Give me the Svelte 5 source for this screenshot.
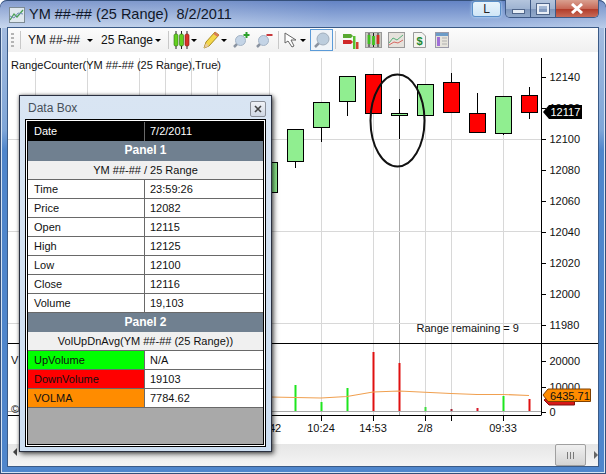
<script lang="ts">
	const prices = [12140, 12120, 12100, 12080, 12060, 12040, 12020, 12000, 11980];
	const priceY = (i: number) => 76.7 + i * 31;
	const gridX = [35, 87, 139, 165, 191, 217, 269, 321, 373, 425, 451, 503];
	const gridY = [139, 231, 323];

	// x, body top, body bottom, wick top, wick bottom, up
	const candles = [
		[269, 162, 192, 162, 192, true],
		[295, 129, 161, 129, 168, true],
		[321, 102, 127, 102, 142, true],
		[347, 76, 101, 76, 116, true],
		[373, 74, 113, 74, 113, false],
		[399, 113, 115, 99, 139, true],
		[425, 84, 115, 84, 115, true],
		[451, 82, 112, 73, 112, false],
		[477, 113, 132, 93, 132, false],
		[503, 96, 133, 96, 135, true],
		[529, 95, 112, 87, 119, false]
	] as const;

	const volumes = [
		[295, 385, '#1ee61e'],
		[321, 402, '#1ee61e'],
		[347, 388, '#1ee61e'],
		[373, 352, '#e01010'],
		[399, 363, '#e01010'],
		[425, 407, '#3fdc3f'],
		[451, 409, '#a02030'],
		[477, 408, '#d81828'],
		[503, 396, '#1ee61e'],
		[529, 399, '#e01010']
	] as const;

	const times = [
		[275, '42'],
		[321, '10:24'],
		[373, '14:53'],
		[425, '2/8'],
		[503, '09:33']
	] as const;

	const rows1 = [
		['Time', '23:59:26'],
		['Price', '12082'],
		['Open', '12115'],
		['High', '12125'],
		['Low', '12100'],
		['Close', '12116'],
		['Volume', '19,103']
	];
	const rows2 = [
		['UpVolume', 'N/A', 'up'],
		['DownVolume', '19103', 'down'],
		['VOLMA', '7784.62', 'ma']
	];
</script>

<div class="window">
	<header class="titlebar">
		<svg class="appicon" width="16" height="16" viewBox="0 0 16 16">
			<rect x="0.5" y="0.5" width="15" height="15" fill="#dfe8ee" stroke="#7d8b94" />
			<path d="M1 13 L5 7 L8 10 L14 3" fill="none" stroke="#4aa056" stroke-width="1.3" />
			<path d="M1 9 L5 11 L9 6 L14 7" fill="none" stroke="#6f8fb4" />
		</svg>
		<span class="title">YM ##-## (25 Range)  8/2/2011</span>
		<button class="lbtn">L</button>
		<div class="caption">
			<span class="cap min"><i></i></span>
			<span class="cap max"><i></i></span>
			<span class="cap close">
				<svg width="14" height="11" viewBox="0 0 14 11"><path d="M2 1 L12 10 M12 1 L2 10" stroke="#fff" stroke-width="3" /></svg>
			</span>
		</div>
	</header>

	<div class="content">
		<nav class="toolbar">
			<span class="grip"></span>
			<span class="sep first"></span>
			<span class="tb-text ym">YM ##-##</span>
			<span class="arrow a1"></span>
			<span class="tb-text range">25 Range</span>
			<span class="arrow a2"></span>
			<span class="sep s2"></span>
			<svg class="ic candles" width="17" height="18" viewBox="0 0 17 18">
				<path d="M3 0V18M8.5 0V18M14 0V18" stroke="#222" />
				<rect x="1" y="3" width="4" height="12" rx="1.5" fill="#63d020" stroke="#2d6a10" stroke-width=".6" />
				<rect x="6.5" y="3" width="4" height="12" rx="1.5" fill="#63d020" stroke="#2d6a10" stroke-width=".6" />
				<rect x="12" y="3" width="4" height="12" rx="1.5" fill="#d8352a" stroke="#7a1a10" stroke-width=".6" />
			</svg>
			<span class="arrow a3"></span>
			<svg class="ic pencil" width="17" height="18" viewBox="0 0 17 18">
				<path d="M1 17 L3 11 L12 1 L16 4 L6 15 Z" fill="#f4d84a" stroke="#a88a20" />
				<path d="M1 17 L3 12 L6 15 Z" fill="#e8c9a0" />
				<path d="M12 1 L16 4 L14.5 6 L10.5 3 Z" fill="#d87a5a" />
			</svg>
			<span class="arrow a4"></span>
			<svg class="ic zoomin" width="18" height="18" viewBox="0 0 18 18">
				<path d="M2 16 L7 11" stroke="#8a93a0" stroke-width="2.5" />
				<circle cx="8.5" cy="9.5" r="5" fill="#c4d4e6" stroke="#a4b4c6" />
				<path d="M14.5 1V7M11.5 4H17.5" stroke="#2ca02c" stroke-width="2" />
			</svg>
			<svg class="ic zoomout" width="18" height="18" viewBox="0 0 18 18">
				<path d="M2 16 L7 11" stroke="#8a93a0" stroke-width="2.5" />
				<circle cx="8.5" cy="9.5" r="5" fill="#c4d4e6" stroke="#a4b4c6" />
				<path d="M11.5 4H17.5" stroke="#c8383c" stroke-width="2" />
			</svg>
			<span class="sep s3"></span>
			<svg class="ic cursor" width="14" height="16" viewBox="0 0 14 16">
				<path d="M1 1 L1 11 L4 9 L8 15 L10 14 L7 8 L12 8 Z" fill="#fff" stroke="#666" />
			</svg>
			<span class="arrow a5"></span>
			<span class="selected">
				<svg width="18" height="18" viewBox="0 0 18 18">
					<path d="M2 16 L7 11" stroke="#8a93a0" stroke-width="2.5" />
					<circle cx="10" cy="8" r="6" fill="#bccddd" stroke="#a0aebc" />
				</svg>
			</span>
			<span class="sep s4"></span>
			<svg class="ic strat" width="17" height="17" viewBox="0 0 17 17">
				<path d="M1 2 H9 L11 4 L9 6 H1 Z" fill="#58a830" />
				<path d="M1 8 H9 L11 10 L9 12 H1 Z" fill="#d02828" />
				<rect x="11" y="4" width="2.5" height="13" fill="#58c030" />
				<rect x="14" y="10" width="2.5" height="7" fill="#d04030" />
			</svg>
			<svg class="ic tile" width="17" height="16" viewBox="0 0 17 16">
				<rect x="0.5" y="0.5" width="16" height="15" fill="#c8c8c0" stroke="#999" />
				<path d="M4 1V15M8.5 1V15M13 1V15" stroke="#222" />
				<rect x="2.6" y="3" width="2.8" height="9" fill="#40c020" />
				<rect x="7.1" y="4" width="2.8" height="9" fill="#40c020" />
				<rect x="11.6" y="3" width="2.8" height="9" fill="#d03020" />
			</svg>
			<svg class="ic tile" width="17" height="16" viewBox="0 0 17 16">
				<rect x="0.5" y="0.5" width="16" height="15" fill="#e6e2dc" stroke="#9a9a9a" />
				<path d="M1 11 L5 6 L9 8 L15 3" fill="none" stroke="#58b078" />
				<path d="M1 13 L6 10 L10 11 L15 8" fill="none" stroke="#d86860" />
			</svg>
			<svg class="ic doc" width="13" height="16" viewBox="0 0 13 16">
				<path d="M.5 .5 H9 L12.5 4 V15.5 H.5 Z" fill="#f4f4f0" stroke="#9a9a9a" />
				<text x="6.5" y="13" class="dollar">$</text>
			</svg>
			<svg class="ic sheet" width="14" height="16" viewBox="0 0 14 16">
				<rect x="0.5" y="0.5" width="13" height="15" fill="#e6e4dc" stroke="#9a9aa8" />
				<rect x="1" y="1" width="12" height="3" fill="#6c9cc8" />
				<rect x="2" y="5" width="3" height="9" fill="#a070d8" />
				<path d="M7 6H12M7 9H12M7 12H12" stroke="#b0b0b0" />
			</svg>
		</nav>

		<main class="chart">
			<svg class="plot" width="590" height="392" viewBox="8 52 590 392">
				{#each gridX as x}
					<line x1={x + 0.5} x2={x + 0.5} y1="58" y2="415" stroke="#d8d8d8" />
				{/each}
				<line x1="399.5" x2="399.5" y1="58" y2="415" stroke="#a8a8a8" />
				{#each gridY as y}
					<line x1="8" x2="541" y1={y + 0.5} y2={y + 0.5} stroke="#d8d8d8" />
				{/each}

				{#each candles as [x, top, bottom, wickTop, wickBottom, up]}
					<line x1={x + 0.5} x2={x + 0.5} y1={wickTop} y2={wickBottom} stroke="#000" />
					<rect x={x - 7.5} y={top + 0.5} width="16" height={bottom - top} fill={up ? '#90ee90' : '#ff0000'} stroke="#000" />
				{/each}

				<ellipse cx="397.5" cy="120.5" rx="27" ry="46" fill="none" stroke="#111" stroke-width="2" />

				<!-- axes -->
				<line x1="541.5" x2="541.5" y1="58" y2="415.5" stroke="#000" />
				<line x1="8" x2="598" y1="343.5" y2="343.5" stroke="#000" />
				<line x1="8" x2="541" y1="415.5" y2="415.5" stroke="#000" />
				<line x1="8" x2="541" y1="411.5" y2="411.5" stroke="#a8a8a8" />

				{#each prices as p, i}
					<line x1="541" x2="546" y1={Math.round(priceY(i)) + 0.5} y2={Math.round(priceY(i)) + 0.5} stroke="#000" />
					<text x="549.5" y={priceY(i) + 4}>{p}</text>
				{/each}

				<path d="M549 105 H582 V119 H549 L543 112 Z" fill="#000" />
				<text x="550.5" y="116" class="white">12117</text>

				<text x="416.5" y="332">Range remaining = 9</text>

				{#each volumes as [x, top, color]}
					<rect x={x - 0.5} y={top} width="2" height={411 - top} fill={color} />
				{/each}
				<polyline
					points="270,397 321,398 347,396.5 373,392 399,391 451,393.5 477,394.5 503,394.5 529,395.5"
					fill="none"
					stroke="#f0a050"
					stroke-width="1.2"
				/>

				{#each [361, 386.5, 412] as y, i}
					<line x1="541" x2="546" y1={Math.round(y) + 0.5} y2={Math.round(y) + 0.5} stroke="#000" />
					<text x="549.5" y={y + 4}>{['20000', '10000', '0'][i]}</text>
				{/each}

				<path d="M549 396 H574.5 V405 H549 L544 400 Z" fill="#d81818" stroke="#801010" />
				<path d="M548 389 H590.5 V401.5 H548 L543 395 Z" fill="#ff8c00" stroke="#804000" />
				<text x="550" y="399.5">6435.71</text>

				{#each times as [x, label]}
					<text x={x} y="432" text-anchor="middle">{label}</text>
				{/each}
				{#each [321, 373, 425, 451, 503] as x}
					<line x1={x + 0.5} x2={x + 0.5} y1="415" y2="421" stroke="#000" />
				{/each}
			</svg>
			<span class="study">RangeCounter(YM ##-## (25 Range),True)</span>
			<span class="vol">V</span>
			<span class="copy">©</span>
		</main>

		<footer class="scrollbar">
			<span class="sarrow left"></span>
			<span class="thumb">
				<svg width="9" height="7" viewBox="0 0 9 7"><path d="M1.5 0V7M4.5 0V7M7.5 0V7" stroke="#7a7a7a" /></svg>
			</span>
			<span class="sarrow right"></span>
		</footer>
	</div>

	<section class="databox">
		<div class="db-head">
			<span>Data Box</span>
			<span class="db-close">
				<svg width="8" height="8" viewBox="0 0 8 8"><path d="M1 1 L7 7 M7 1 L1 7" stroke="#444" stroke-width="1.6" /></svg>
			</span>
		</div>
		<div class="db-frame">
			<div class="db-grid">
				<div class="row date"><span>Date</span><span>7/2/2011</span></div>
				<div class="panel first">Panel 1</div>
				<div class="sub">YM ##-## / 25 Range</div>
				{#each rows1 as [label, value]}
					<div class="row"><span>{label}</span><span>{value}</span></div>
				{/each}
				<div class="panel">Panel 2</div>
				<div class="sub">VolUpDnAvg(YM ##-## (25 Range))</div>
				{#each rows2 as [label, value, kind]}
					<div class="row"><span class={kind}>{label}</span><span>{value}</span></div>
				{/each}
			</div>
		</div>
	</section>
</div>

<style>
	:global(body) {
		margin: 0;
		font-family: 'Liberation Sans', Arial, sans-serif;
	}
	.window {
		position: relative;
		width: 606px;
		height: 474px;
		box-sizing: border-box;
		padding: 0 8px 8px 8px;
		display: flex;
		flex-direction: column;
		overflow: hidden;
		background: linear-gradient(180deg, #8fa9d6 0, #a3bbdf 30px, #7fa6d8 130px, #4f86cc 150px, #4f86cc 100%);
		border-radius: 7px 7px 0 0;
		box-shadow: inset 0 0 0 1px #35507a, inset 0 0 0 2px #d6e4f4;
	}
	.titlebar {
		height: 28px;
		flex: none;
		display: flex;
		align-items: flex-start;
		background:
			linear-gradient(180deg, rgba(60, 95, 175, 0.55), rgba(190, 208, 236, 0.55)),
			linear-gradient(90deg, #d4e0f0 0, #c6d6ec 30%, #8fabdc 55%, #8fabdc 80%, #b4c8e6 100%);
		margin: 0 -8px;
		padding: 0 8px;
		border-radius: 7px 7px 0 0;
		box-shadow: inset 0 1px 0 #35507a;
	}
	.appicon {
		margin: 7px 0 0 1px;
	}
	.title {
		margin: 6px 0 0 4px;
		font-size: 14.5px;
		line-height: 16px;
		white-space: pre;
		color: #10182a;
	}
	.lbtn {
		margin: 1px 0 0 auto;
		width: 29px;
		height: 16px;
		padding: 0;
		border: 1px solid #5a8fc8;
		border-radius: 3px;
		background: linear-gradient(180deg, #e8f4fc, #d0e6f6);
		box-shadow: 0 0 3px #bfe8ff;
		font: 12px 'Liberation Sans', sans-serif;
		color: #222;
	}
	.caption {
		display: flex;
		margin-left: 4px;
		margin-right: -1px;
		height: 17px;
		border: 1px solid #3f5a86;
		border-top: none;
		border-radius: 0 0 5px 5px;
		overflow: hidden;
	}
	.cap {
		display: flex;
		align-items: center;
		justify-content: center;
		box-sizing: border-box;
		width: 25px;
		background: linear-gradient(180deg, #b4c5dd 0, #9fb4d2 50%, #7f97bc 52%, #93aacb 100%);
		border-right: 1px solid #3f5a86;
	}
	.cap.min i {
		display: block;
		width: 11px;
		height: 3px;
		margin-top: 6px;
		background: #e8eef6;
		border: 1px solid #50668a;
	}
	.cap.max i {
		display: block;
		width: 8px;
		height: 6px;
		border: 2px solid #e8eef6;
		outline: 1px solid #50668a;
	}
	.cap.close {
		width: 42px;
		border-right: none;
		background: linear-gradient(180deg, #d9a090 0, #c86a58 50%, #b03a28 52%, #c86a58 100%);
	}
	.content {
		flex: 1;
		display: flex;
		flex-direction: column;
		background: #fff;
		outline: 1px solid #3a5a86;
		min-height: 0;
	}
	.toolbar {
		height: 24px;
		flex: none;
		display: flex;
		align-items: center;
		background: linear-gradient(180deg, #fcfcfc, #f0f0f0);
	}
	.grip {
		width: 3px;
		height: 14px;
		margin-left: 3px;
		background: repeating-linear-gradient(180deg, #b4b4b4 0 2px, transparent 2px 4px);
	}
	.sep {
		width: 1px;
		height: 18px;
		background: #c8c8c8;
	}
	.sep.first {
		margin-left: 6px;
	}
	.sep.s2 {
		margin-left: 7px;
	}
	.sep.s3 {
		margin-left: 5px;
	}
	.sep.s4 {
		margin-left: 2px;
	}
	.tb-text {
		font-size: 12px;
		color: #111;
		white-space: nowrap;
		width: 55px;
	}
	.tb-text.ym {
		margin-left: 7px;
	}
	.tb-text.range {
		margin-left: 8px;
		width: 50px;
	}
	.arrow {
		width: 0;
		height: 0;
		border: 3px solid transparent;
		border-top: 3px solid #000;
		border-bottom: none;
	}
	.a1,
	.a2 {
		margin-left: 4px;
	}
	.a3,
	.a4 {
		margin-left: 1px;
	}
	.a5 {
		margin-left: 2px;
	}
	.candles {
		margin-left: 4px;
	}
	.pencil {
		margin-left: 6px;
	}
	.zoomin {
		margin-left: 5px;
	}
	.zoomout {
		margin-left: 5px;
	}
	.cursor {
		margin-left: 5px;
	}
	.selected {
		display: flex;
		align-items: center;
		justify-content: center;
		box-sizing: border-box;
		width: 23px;
		height: 22px;
		margin-left: 4px;
		border: 1px solid #5b9bd8;
		background: #f0f4f8;
	}
	.strat,
	.tile {
		margin-left: 6px;
	}
	.doc {
		margin-left: 8px;
	}
	.sheet {
		margin-left: 9px;
	}
	.dollar {
		font-size: 11px;
		font-weight: bold;
		fill: #1f8a30;
		text-anchor: middle;
	}
	.chart {
		position: relative;
		flex: 1;
		min-height: 0;
		font-size: 11px;
		color: #111;
	}
	.plot {
		display: block;
	}
	.plot text {
		font-size: 11px;
		fill: #111;
	}
	.plot text.white {
		fill: #fff;
	}
	.study {
		position: absolute;
		left: 3px;
		top: 7px;
		white-space: nowrap;
	}
	.vol {
		position: absolute;
		left: 3px;
		top: 302px;
	}
	.copy {
		position: absolute;
		left: 3px;
		top: 351px;
	}
	.scrollbar {
		height: 22px;
		flex: none;
		display: flex;
		align-items: center;
		background: linear-gradient(180deg, #e6e6e6, #f4f4f4);
	}
	.sarrow {
		width: 0;
		height: 0;
		border: 4px solid transparent;
	}
	.sarrow.left {
		margin-left: 5px;
		margin-top: -6px;
		border-left: none;
		border-right: 4px solid #444;
	}
	.sarrow.right {
		margin-left: 8px;
		border-right: none;
		border-left: 4px solid #666;
	}
	.thumb {
		display: flex;
		align-items: center;
		justify-content: center;
		margin-left: auto;
		box-sizing: border-box;
		width: 31px;
		height: 22px;
		border: 1px solid #a0a0a0;
		border-radius: 2px;
		background: linear-gradient(180deg, #f0f0f0, #d4d4d4);
	}
	.databox {
		position: absolute;
		left: 19px;
		top: 95px;
		width: 253px;
		height: 357px;
		box-sizing: border-box;
		padding: 0 5px 4px;
		border: 1px solid #2a3040;
		background: linear-gradient(180deg, #d9e5f3, #cddef1);
		box-shadow: 2px 2px 5px rgba(0, 0, 0, 0.6), 0 0 3px rgba(0, 0, 0, 0.4);
		display: flex;
		flex-direction: column;
		font-size: 11px;
		color: #111;
	}
	.db-head {
		height: 23px;
		flex: none;
		display: flex;
		align-items: center;
		justify-content: space-between;
		padding-left: 3px;
		font-size: 12px;
		color: #47505a;
	}
	.db-close {
		display: flex;
		align-items: center;
		justify-content: center;
		box-sizing: border-box;
		width: 16px;
		height: 16px;
		margin-top: 2px;
		border: 1px solid #8a8f98;
		border-radius: 2px;
		background: linear-gradient(180deg, #f0f2f6, #d0d8e4);
	}
	.db-frame {
		flex: 1;
		border: 1px solid #000;
		background: #fff;
		padding: 1px;
	}
	.db-grid {
		height: 100%;
		box-sizing: border-box;
		border: 1px solid #000;
		background: #a9a9a9;
	}
	.row {
		height: 19px;
		box-sizing: border-box;
		display: grid;
		grid-template-columns: 117px 1fr;
		background: #fff;
		border-bottom: 1px solid #696969;
		line-height: 18px;
	}
	.row span {
		padding-left: 5px;
	}
	.row span:first-child {
		padding-left: 6px;
		border-right: 1px solid #696969;
	}
	.row.date {
		background: #000;
		color: #fff;
		border-bottom: none;
	}
	.row .up {
		background: #00ff00;
	}
	.row .down {
		background: #ff0000;
	}
	.row .ma {
		background: #ff8c00;
	}
	.panel {
		height: 19px;
		background: #708090;
		color: #fff;
		font-weight: bold;
		font-size: 12px;
		line-height: 19px;
		text-align: center;
	}
	.panel.first {
		height: 20px;
	}
	.sub {
		height: 19px;
		box-sizing: border-box;
		background: #f0f0f0;
		line-height: 18px;
		text-align: center;
		border-bottom: 1px solid #696969;
	}
</style>
